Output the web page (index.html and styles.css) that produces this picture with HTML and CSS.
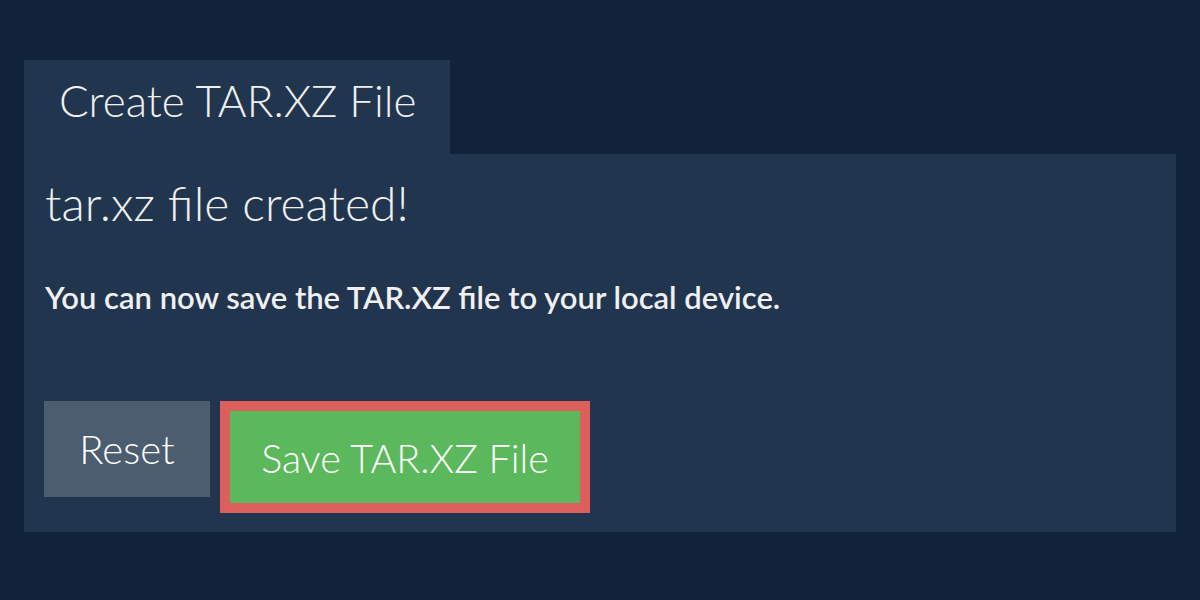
FILE: index.html
```html
<!DOCTYPE html>
<html>
<head>
<meta charset="utf-8">
<link rel="stylesheet" href="styles.css">
</head>
<body>
<div class="wrap">
  <div class="tab">Create TAR.XZ File</div>
  <div class="panel">
    <h2 class="headline">tar.xz file created!</h2>
    <p class="note">You can now save the TAR.XZ file to your local device.</p>
    <div class="actions">
      <button class="btn btn-reset">Reset</button>
      <button class="btn btn-save">Save TAR.XZ File</button>
    </div>
  </div>
</div>
</body>
</html>
```

FILE: styles.css
```css
html, body {
  margin: 0;
  padding: 0;
  background: #11233a;
  font-family: Lato, "Open Sans", sans-serif;
  color: #f0f0f0;
}
.wrap {
  padding: 60px 24px 0 24px;
}
.tab {
  display: inline-block;
  vertical-align: top;
  box-sizing: border-box;
  width: 426px;
  height: 94px;
  padding-left: 35px;
  background: #21354f;
  font-size: 44px;
  font-weight: 300;
  line-height: 80px;
}
.panel {
  box-sizing: border-box;
  height: 378px;
  background: #21354f;
  padding: 0 21px;
  display: flex;
  flex-direction: column;
}
.headline {
  margin: 21px 0 0 0;
  font-size: 48px;
  font-weight: 300;
  line-height: 56px;
}
.note {
  margin: 46px 0 0 0;
  font-size: 31px;
  font-weight: 600;
  line-height: 40px;
}
.actions {
  display: flex;
  align-items: flex-start;
  gap: 10px;
  margin-top: 84px;
  margin-left: -1px;
}
.btn {
  font-family: Lato, "Open Sans", sans-serif;
  font-weight: 300;
  color: #ffffff;
  border: none;
  cursor: pointer;
  box-sizing: border-box;
  padding: 0;
}
.btn-reset {
  width: 166px;
  height: 96px;
  background: #4b5d6f;
  font-size: 40px;
}
.btn-save {
  width: 370px;
  height: 112px;
  background: #5cb85c;
  border: 10px solid #dc5f5b;
  font-size: 39.5px;
}
```
